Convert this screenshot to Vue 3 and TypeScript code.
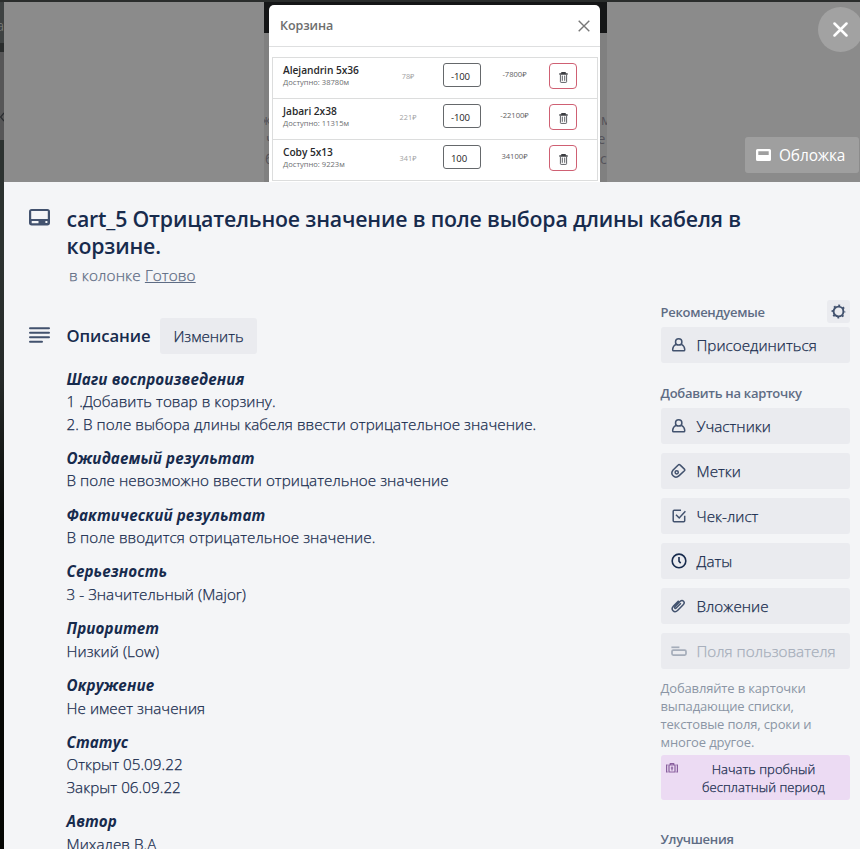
<script setup lang="ts">
interface CartRow { name: string; stock: string; price: string; qty: string; total: string }
interface Section { title: string; lines: string[] }
interface Action { icon: string; label: string; disabled?: boolean }

const cart: CartRow[] = [
  { name: 'Alejandrin 5x36', stock: 'Доступно: 38780м', price: '78₽', qty: '-100', total: '-7800₽' },
  { name: 'Jabari 2x38', stock: 'Доступно: 11315м', price: '221₽', qty: '-100', total: '-22100₽' },
  { name: 'Coby 5x13', stock: 'Доступно: 9223м', price: '341₽', qty: '100', total: '34100₽' },
]

const sections: Section[] = [
  { title: 'Шаги воспроизведения', lines: ['1 .Добавить товар в корзину.', '2. В поле выбора длины кабеля ввести отрицательное значение.'] },
  { title: 'Ожидаемый результат', lines: ['В поле невозможно ввести отрицательное значение'] },
  { title: 'Фактический результат', lines: ['В поле вводится отрицательное значение.'] },
  { title: 'Серьезность', lines: ['3 - Значительный (Major)'] },
  { title: 'Приоритет', lines: ['Низкий (Low)'] },
  { title: 'Окружение', lines: ['Не имеет значения'] },
  { title: 'Статус', lines: ['Открыт 05.09.22', 'Закрыт 06.09.22'] },
  { title: 'Автор', lines: ['Михалев В.А'] },
]

const actions: Action[] = [
  { icon: 'user', label: 'Участники' },
  { icon: 'label', label: 'Метки' },
  { icon: 'check', label: 'Чек-лист' },
  { icon: 'clock', label: 'Даты' },
  { icon: 'clip', label: 'Вложение' },
  { icon: 'field', label: 'Поля пользователя', disabled: true },
]
</script>

<template>
  <div class="page">
    <div class="board-edge">
      <span class="edge-letter">а</span>
      <svg class="edge-chevron" width="4" height="10" viewBox="0 0 4 10"><path d="M4 1 .5 5 4 9" fill="none" stroke="#292c30" stroke-width="1.2" /></svg>
    </div>
    <main class="card">
      <header class="cover">
        <div class="shot">
          <div class="shot-bar"></div>
          <span class="ghost g1">ж</span><span class="ghost g2">ч</span><span class="ghost g3">б</span>
          <span class="ghost g4">м</span><span class="ghost g5">те</span><span class="ghost g6">с</span>
          <div class="basket">
            <div class="basket-head">
              <span>Корзина</span>
              <svg width="12" height="12" viewBox="0 0 12 12"><path d="M.7.7 11.3 11.3M11.3.7.7 11.3" stroke="#777" stroke-width="1.4" fill="none" /></svg>
            </div>
            <div class="basket-list">
              <div v-for="row in cart" :key="row.name" class="basket-row">
                <div class="product">
                  <b>{{ row.name }}</b>
                  <small>{{ row.stock }}</small>
                </div>
                <span class="price">{{ row.price }}</span>
                <span class="qty">{{ row.qty }}</span>
                <span class="total">{{ row.total }}</span>
                <span class="trash">
                  <svg width="9" height="11" viewBox="0 0 9 11"><path d="M.3 2h8.400M2.900 1.700V.7h3.200v1" fill="none" stroke="#3c3e42" stroke-width="1.300" /><path d="M1.400 3v6.700q0 .7.7.7h4.800q.7 0 .7-.7V3M3.300 3.600v5.200M5.700 3.600v5.200" fill="none" stroke="#5c5f64" stroke-width="1" /></svg>
                </span>
              </div>
            </div>
          </div>
        </div>
        <button class="close" aria-label="Закрыть">
          <svg width="15" height="15" viewBox="0 0 15 15"><path d="m1.500 1.500 12 12m0-12-12 12" stroke="#fff" stroke-width="2.500" stroke-linecap="round" /></svg>
        </button>
        <button class="cover-btn">
          <svg width="15" height="12" viewBox="0 0 15 12"><path fill-rule="evenodd" fill="#fff" d="M1.500 0h12A1.500 1.500 0 0 1 15 1.500v9a1.500 1.500 0 0 1-1.500 1.500h-12A1.500 1.500 0 0 1 0 10.500v-9A1.500 1.500 0 0 1 1.500 0ZM2.300 2.300v3.700h10.400V2.300Z" /></svg>
          <span>Обложка</span>
        </button>
      </header>

      <section class="heading">
        <svg class="card-icon" width="21" height="17" viewBox="0 0 21 17"><path fill="#42526e" fill-rule="evenodd" d="M2.700 0h15.600A2.700 2.700 0 0 1 21 2.700v11.100a2.700 2.700 0 0 1-2.700 2.700H2.700A2.700 2.700 0 0 1 0 13.800V2.700A2.700 2.700 0 0 1 2.700 0Zm-.5 2v8h16.600V2Zm.5 9.900v2.300h6.800v-2.300Zm13.700 0v2h2v-2Z" /></svg>
        <div>
          <h1>cart_5 Отрицательное значение в поле выбора длины кабеля в<br>корзине.</h1>
          <p class="column">в колонке <a>Готово</a></p>
        </div>
      </section>

      <div class="columns">
        <article>
          <div class="desc-head">
            <svg width="21" height="16" viewBox="0 0 21 16"><path d="M1 1.200h19M1 5.700h19M1 10.200h19M1 14.700h12" stroke="#42526e" stroke-width="2" stroke-linecap="round" /></svg>
            <h2>Описание</h2>
            <button class="edit">Изменить</button>
          </div>
          <div class="description">
            <p v-for="s in sections" :key="s.title">
              <strong>{{ s.title }}</strong>
              <span v-for="line in s.lines" :key="line">{{ line }}</span>
            </p>
          </div>
        </article>

        <aside>
          <div class="side-head">
            <h3>Рекомендуемые</h3>
            <button class="gear" aria-label="Настройки">
              <svg width="15" height="15" viewBox="0 0 15 15" fill="none" stroke="#42526e"><circle cx="7.500" cy="7.500" r="4.900" stroke-width="1.900" /><circle cx="7.500" cy="7.500" r="6.100" stroke-width="1.700" stroke-dasharray="1.900 2.891" stroke-dashoffset=".95" /></svg>
            </button>
          </div>
          <button class="action">
            <svg width="16" height="16" viewBox="0 0 16 16" fill="none" stroke="#42526e" stroke-width="1.500"><circle cx="7.700" cy="4.900" r="3.200" /><path d="M5 7.400C3 8.500 1.700 10.300 1.700 12.300v.6c0 .6.3.9.9.9h10.200c.6 0 .9-.3.9-.9v-.6c0-2-1.300-3.800-3.300-4.900" /></svg>
            <span>Присоединиться</span>
          </button>
          <h3 class="add-title">Добавить на карточку</h3>
          <div class="actions">
            <button v-for="a in actions" :key="a.label" class="action" :class="{ disabled: a.disabled }">
              <svg width="16" height="16" viewBox="0 0 16 16" fill="none" stroke="#42526e" stroke-width="1.500">
                <template v-if="a.icon === 'user'"><circle cx="7.700" cy="4.900" r="3.200" /><path d="M5 7.400C3 8.500 1.700 10.300 1.700 12.300v.6c0 .6.3.9.9.9h10.200c.6 0 .9-.3.9-.9v-.6c0-2-1.300-3.800-3.300-4.900" /></template>
                <template v-else-if="a.icon === 'label'"><path d="m9 1.900 4.400 4.200q.8.800 0 1.600l-5.200 4.900c-1.900 1.800-4.500 1.800-6.100.2s-1.500-3.800-.2-5.500L7.200 2q.9-1 1.800-.1Z" /><circle cx="5.700" cy="9.300" r="1.600" /></template>
                <path v-else-if="a.icon === 'check'" d="M10 2.300H3.200q-1 0-1 1v9.500q0 1 1 1h9.500q1 0 1-1V7.800M5 6.700l3.200 3.300 6.200-6.700" />
                <path v-else-if="a.icon === 'clock'" stroke="#172b4d" stroke-width="1.600" d="M8 1.100a6.800 6.800 0 1 0 0 13.600A6.800 6.800 0 1 0 8 1.100Zm0 2.900v4.200l1.700 1.900" />
                <path v-else-if="a.icon === 'clip'" d="m9.900 5.200-4.700 4.900c-.9.9-2.200-.3-1.300-1.300L9 3.500c2.600-2.500 5.700.6 3.200 3.200l-5.400 5.600c-3.500 3.500-7.700-.7-4.300-4.200l5.200-5.300" />
                <g v-else stroke="#a5adba" stroke-width="1.700"><path d="M.4 4.300h8" /><rect x="1" y="7.200" width="14" height="4.900" rx="1.300" /></g>
              </svg>
              <span>{{ a.label }}</span>
            </button>
          </div>
          <p class="hint">Добавляйте в карточки<br>выпадающие списки,<br>текстовые поля, сроки и<br>многое другое.</p>
          <button class="trial">
            <svg width="12" height="10" viewBox="0 0 12 10" fill="none" stroke="#89609e" stroke-width="1.200"><path d="M1.700 2H.6v7h1.100M10.300 2h1.100v7h-1.100M3 2h6v7H3ZM4.300 2V.6h3.400V2M6 3.600v3.800M4.800 5h2.400" /></svg>
            <span>Начать пробный<br>бесплатный период</span>
          </button>
          <h3 class="power">Улучшения</h3>
        </aside>
      </div>
    </main>
  </div>
</template>

<style>
body { overflow: hidden; }
</style>

<style scoped>
* { box-sizing: border-box; }
.page {
  display: flex;
  width: 860px;
  height: 849px;
  padding-top: 2px;
  overflow: hidden;
  background: #2a2d2c;
  color: #172b4d;
  font-family: "Open Sans", "Noto Sans", sans-serif;
  font-size: 15.200px;
  font-weight: 300;
}
h1, h2, h3, p { margin: 0; }
button { border: 0; font: inherit; color: inherit; text-align: left; }
svg { display: block; flex: none; }

.board-edge {
  position: relative;
  flex: none;
  width: 4px;
  overflow: hidden;
  background: linear-gradient(#3e4242 0 41px, #292c2c 41px 50px, #565657 50px 138px, #2c3230 138px 250px, #252928 380px, #080a08 520px, #050603);
}
.edge-letter { position: absolute; right: 0; top: 14px; color: #828585; font-size: 14px; line-height: 20px; }
.edge-chevron { position: absolute; left: 0; top: 110px; }

.card { flex: none; width: 856px; background: #f4f5f7; }
.cover { position: relative; display: flex; height: 180px; padding-left: 260px; background: #8b8b8b; }
.shot { position: relative; width: 343px; height: 180px; padding: 3px 7px 0 5px; overflow: hidden; background: #808080; }
.shot-bar { position: absolute; inset: 0 0 auto; height: 31px; background: #151617; }
.ghost { position: absolute; color: #55535a; font-size: 14px; font-weight: 400; line-height: 20px; }
.g1 { left: -3px; top: 108px; }
.g2 { left: 2px; top: 127px; }
.g3 { left: 1px; top: 147px; }
.g4 { left: 337px; top: 108px; }
.g5 { left: 327px; top: 127px; }
.g6 { left: 336px; top: 147px; }
.basket { position: relative; width: 331px; height: 190px; border-radius: 5px; background: #fff; }
.basket-head { display: flex; align-items: center; justify-content: space-between; height: 42px; padding: 0 10px 0 11px; border-bottom: 1px solid #dedfe0; color: #6d6d6d; font-size: 12.500px; font-weight: 600; }
.basket-head span { letter-spacing: -.1px; }
.basket-list { margin: 10px 2px 0 3px; border: 1px solid #dcdddd; border-bottom: 0; }
.basket-row { display: grid; grid-template-columns: 104px 62px 38px 67px 28px; align-items: start; height: 41px; padding: 5px 0 0 10px; border-bottom: 1px solid #dcdddd; }
.product { display: flex; flex-direction: column; }
.product b { color: #28292b; font-size: 10.200px; font-weight: 600; line-height: 14px; letter-spacing: -.04px; white-space: nowrap; }
.product small { color: #6c6e70; font-size: 7.600px; line-height: 10px; }
.price { margin: 0 20px 0 0; padding: 8px 0 0; color: #a0a1a2; font-size: 7.300px; line-height: 10px; text-align: center; }
.qty { width: 38px; height: 24px; margin-left: -6px; padding-left: 7px; border: 1px solid #65686b; border-radius: 3px; color: #1d2125; font-size: 9.600px; line-height: 26px; letter-spacing: -.15px; }
.total { padding: 6px 12px 0 0; color: #5f6163; font-size: 7.600px; line-height: 10px; text-align: center; }
.price, .total, .product small, .qty { font-weight: 400; }
.trash { display: grid; place-items: center; width: 28px; height: 26px; margin-left: -5px; padding-top: 2px; border: 1px solid #cf6073; border-radius: 4px; }
.close { position: absolute; left: 814px; top: 5px; display: grid; place-items: center; width: 45px; height: 45px; padding: 0; border-radius: 50%; background: #a2a2a2; }
.cover-btn { position: absolute; left: 741px; top: 135px; display: flex; align-items: center; gap: 8px; width: 114px; height: 36px; padding: 0 0 0 11px; border-radius: 3px; background: #9f9f9f; color: #fff; letter-spacing: -.1px; font-size: 15.400px; font-weight: 400; }

.heading { display: flex; gap: 17px; height: 110px; padding: 23px 0 0 25px; }
.card-icon { margin-top: 4px; }
h1 { margin-left: -.5px; font-size: 21.300px; font-weight: 600; line-height: 27px; letter-spacing: -.18px; white-space: nowrap; }
.column { margin: 5px 0 0 2px; color: #5e6c84; font-size: 15.300px; line-height: 22px; letter-spacing: .12px; }
.column a { text-decoration: underline; }

.columns { display: flex; height: 557px; overflow: hidden; }
article { width: 656.500px; padding: 26px 0 0 25px; }
.desc-head { display: flex; align-items: center; height: 36px; }
.desc-head svg { margin: -2px 16.500px 0 0; }
h2 { width: 93.500px; font-size: 16.700px; font-weight: 600; line-height: 22px; letter-spacing: -.1px; }
.edit { width: 97px; height: 36px; padding: 0; border-radius: 3px; background: #eaebef; text-align: center; }
.description { padding: 13.600px 0 0 37.500px; }
.description p { margin-bottom: 11.800px; line-height: 22.500px; white-space: nowrap; }
.description strong { display: block; font-style: italic; font-weight: 700; letter-spacing: .1px; }
.description span { display: block; letter-spacing: .055px; }
.description span, .column, .edit, .action span, .trial span { -webkit-text-stroke: .25px currentColor; }

aside { width: 189px; margin-top: 8px; }
.side-head { display: flex; align-items: center; justify-content: space-between; height: 23px; margin-bottom: 4px; }
h3 { color: #5e6c84; font-size: 13px; font-weight: 600; line-height: 20px; letter-spacing: -.28px; white-space: nowrap; }
.gear { display: grid; place-items: center; width: 23px; height: 23px; padding: 0; border-radius: 3px; background: #eaebef; }
.action { display: flex; align-items: center; gap: 10px; width: 189px; height: 36px; padding: 0 0 0 10px; border-radius: 3px; background: #eaebef; letter-spacing: .02px; white-space: nowrap; }
.add-title { margin: 20px 0 5px; }
.actions { display: grid; gap: 9px; }
.disabled { color: #a5adba; }
.hint { margin-top: 10px; color: #8b95a5; font-size: 13px; font-weight: 400; line-height: 18px; letter-spacing: -.15px; white-space: nowrap; }
.trial { display: flex; align-items: flex-start; width: 189px; height: 45px; margin-top: 4px; padding: 5px 0 0 5px; border-radius: 3px; background: #ecdbf3; font-size: 13px; line-height: 18px; letter-spacing: .05px; }
.trial svg { margin-top: 3px; }
.trial span { flex: 1; text-align: center; }
.power { margin-top: 29px; }
</style>
